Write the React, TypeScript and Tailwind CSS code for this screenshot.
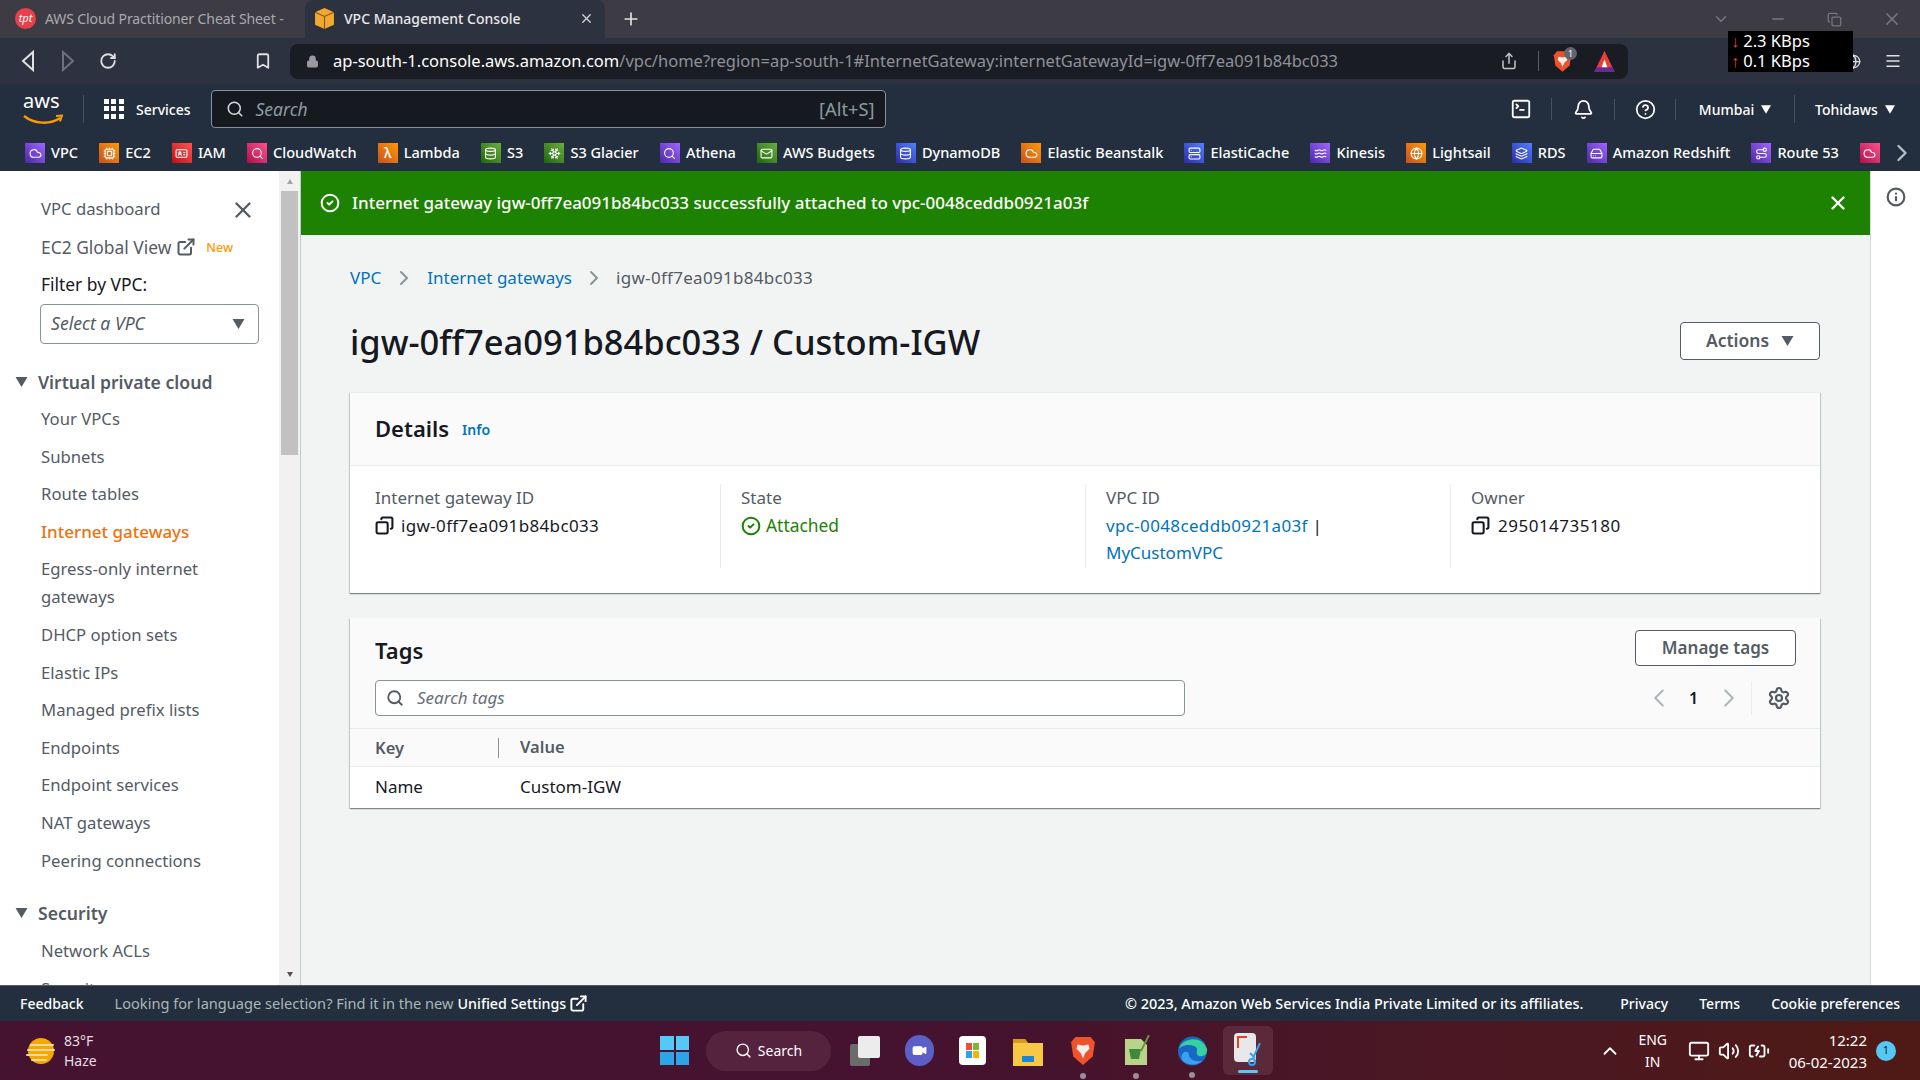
import { ReactNode } from "react"
import {
  Bell, ChevronLeft, ChevronRight, ChevronUp, Cloud, Cpu, Database, ExternalLink, Globe, HardDrive, IdCard, Info, Layers, Lock, Mail,
  Menu, Minus, Monitor, Plus, RotateCw, Route, Search, Server, Settings, Share, Snowflake, SquareTerminal, Video, Volume2, Waves, X, Bookmark, CircleHelp, CircleCheck, Copy, BatteryCharging,
} from "lucide-react"

const purple = "bg-gradient-to-tr from-[#4d27a8] to-[#a166ff]"
const orange = "bg-gradient-to-tr from-[#c8511b] to-[#ff9900]"
const red = "bg-gradient-to-tr from-[#bd0816] to-[#ff5252]"
const pink = "bg-gradient-to-tr from-[#b0084d] to-[#ff4f8b]"
const green = "bg-gradient-to-tr from-[#1b660f] to-[#6cae3e]"
const blue = "bg-gradient-to-tr from-[#2e27ad] to-[#527fff]"

const favorites = [
  { name: "VPC", cls: purple, icon: <Cloud size={13} /> },
  { name: "EC2", cls: orange, icon: <Cpu size={13} /> },
  { name: "IAM", cls: red, icon: <IdCard size={13} /> },
  { name: "CloudWatch", cls: pink, icon: <Search size={13} /> },
  { name: "Lambda", cls: orange, icon: <span className="text-[14px] leading-none">λ</span> },
  { name: "S3", cls: green, icon: <Database size={13} /> },
  { name: "S3 Glacier", cls: green, icon: <Snowflake size={13} /> },
  { name: "Athena", cls: purple, icon: <Search size={13} /> },
  { name: "AWS Budgets", cls: green, icon: <Mail size={13} /> },
  { name: "DynamoDB", cls: blue, icon: <Database size={13} /> },
  { name: "Elastic Beanstalk", cls: orange, icon: <Cloud size={13} /> },
  { name: "ElastiCache", cls: blue, icon: <Server size={13} /> },
  { name: "Kinesis", cls: purple, icon: <Waves size={13} /> },
  { name: "Lightsail", cls: orange, icon: <Globe size={13} /> },
  { name: "RDS", cls: blue, icon: <Layers size={13} /> },
  { name: "Amazon Redshift", cls: purple, icon: <HardDrive size={13} /> },
  { name: "Route 53", cls: purple, icon: <Route size={13} /> },
]

const vpcLinks = ["Your VPCs", "Subnets", "Route tables", "Internet gateways", "Egress-only internet gateways", "DHCP option sets", "Elastic IPs", "Managed prefix lists", "Endpoints", "Endpoint services", "NAT gateways", "Peering connections"]

const cardShadow = "shadow-[0_1px_1px_0_rgba(0,28,36,0.3),1px_1px_1px_0_rgba(0,28,36,0.15),-1px_1px_1px_0_rgba(0,28,36,0.15)]"

function Caret({ className = "" }: { className?: string }) {
  return (
    <svg viewBox="0 0 12 10" className={className} fill="currentColor">
      <path d="M0 0h12L6 10z" />
    </svg>
  )
}

function BraveShield({ className = "" }: { className?: string }) {
  return (
    <svg viewBox="0 0 24 28" className={className}>
      <path d="M5 1h14l4 5-2 13-9 8-9-8L1 6z" fill="#f0532b" />
      <path d="M7 8l5 1 5-1 1 4-4 4-2 5-2-5-4-4z" fill="#fff" opacity="0.9" />
    </svg>
  )
}

function AwsLogo() {
  return (
    <div className="relative w-[40px] h-[34px]">
      <span className="absolute left-0 top-[-3px] text-[20px] leading-[24px] text-white font-normal">aws</span>
      <svg viewBox="0 0 40 12" className="absolute left-0 bottom-0 w-[40px] h-[12px]" fill="none">
        <path d="M1 2c10 8 26 9 36 2" stroke="#f90" strokeWidth="2.4" />
        <path d="M33 2l6-.5-2 6" stroke="#f90" strokeWidth="2" />
      </svg>
    </div>
  )
}

function ChromeBars() {
  return (
    <>
      <div className="h-[38px] bg-[#3d3c45] flex items-end text-[14px] shrink-0">
        <div className="w-[305px] h-[37px] flex items-center pl-[15px] text-[#a9a9ae] whitespace-nowrap overflow-hidden pb-[2px]">
          <span className="w-[21px] h-[21px] rounded-full bg-[#e8404a] text-white text-[11px] italic flex items-center justify-center mr-[9px] shrink-0">tpt</span>
          <span className="tracking-[-0.1px]">AWS Cloud Practitioner Cheat Sheet -</span>
        </div>
        <div className="w-[300px] h-[38px] bg-[#2d3240] rounded-t-lg flex items-center pl-[10px] pr-[11px] pb-[2px] text-[#e8e8ea]">
          <svg viewBox="0 0 18 20" className="w-[19px] h-[21px] mr-[10px]">
            <path d="M9 0l9 4v12l-9 4-9-4V4z" fill="#f0a92e" />
            <path d="M9 8v12M0 4l9 4 9-4" stroke="#7a5510" strokeWidth="1" fill="none" />
          </svg>
          <span className="font-medium">VPC Management Console</span>
          <X size={15} className="ml-auto text-[#d8d8da]" />
        </div>
        <Plus size={20} className="text-[#e2e2e4] ml-[16px] mb-[9px]" />
        <div className="ml-auto h-[38px] flex items-center text-[#77777e]">
          <span className="w-[57px] flex justify-center"><ChevronUp size={18} className="rotate-180" /></span>
          <span className="w-[57px] flex justify-center"><Minus size={18} /></span>
          <span className="w-[57px] flex justify-center"><Copy size={15} /></span>
          <span className="w-[57px] flex justify-center"><X size={20} /></span>
        </div>
      </div>
      <div className="h-[46px] bg-[#2d3240] flex items-center shrink-0 text-[#e0e0e2]">
        <svg viewBox="0 0 14 22" className="w-[14px] h-[22px] ml-[21px]" fill="none" stroke="currentColor" strokeWidth="2">
          <path d="M12 2L2 11l10 9z" />
        </svg>
        <svg viewBox="0 0 14 22" className="w-[14px] h-[22px] ml-[26px] text-[#6f727c]" fill="none" stroke="currentColor" strokeWidth="2">
          <path d="M2 2l10 9-10 9z" />
        </svg>
        <RotateCw size={18} strokeWidth={2.4} className="ml-[24px]" />
        <Bookmark size={18} strokeWidth={2.4} className="ml-[137px]" />
        <div className="ml-[18px] w-[1338px] h-[35px] rounded-lg bg-[#1a1c23] flex items-center pl-[16px] text-[16.5px] whitespace-nowrap">
          <Lock size={13} className="text-[#9a9aa0] fill-[#9a9aa0] mr-[14px]" />
          <span className="text-white">ap-south-1.console.aws.amazon.com</span>
          <span className="text-[#8f9199]">/vpc/home?region=ap-south-1#InternetGateway:internetGatewayId=igw-0ff7ea091b84bc033</span>
          <Share size={18} className="ml-auto text-[#c5c5c8]" />
          <span className="w-px h-[20px] bg-[#5a5c66] ml-[20px]" />
          <span className="relative ml-[14px] mr-[21px]">
            <BraveShield className="block w-[19px] h-[23px]" />
            <span className="absolute -top-[3px] left-[11px] w-[13px] h-[13px] rounded-full bg-[#62646e] text-[9px] leading-[13px] text-center text-white">1</span>
          </span>
          <svg viewBox="0 0 24 24" className="w-[23px] h-[23px] mr-[12px]">
            <path d="M12 1l11 22H1z" fill="#6a2a92" />
            <path d="M12 1l8 17H4z" fill="#e8412e" />
            <path d="M12 10l3 8H9z" fill="#fff" />
          </svg>
        </div>
        <Globe size={15} className="ml-[218px]" />
        <Menu size={18} className="ml-auto mr-[18px]" />
      </div>
    </>
  )
}

function AwsHeader() {
  return (
    <div className="bg-[#232f3e] shrink-0 text-white text-[14px]">
      <div className="h-[47px] pt-[3px] flex items-center">
        <div className="ml-[23px]"><AwsLogo /></div>
        <span className="w-px h-[28px] bg-[#47525f] ml-[20px]" />
        <div className="ml-[20px] grid grid-cols-3 gap-[2px] w-[20px] h-[20px]">
          {Array.from({ length: 9 }).map((_, i) => (
            <span key={i} className="bg-white w-[5px] h-[5px]" />
          ))}
        </div>
        <span className="ml-[12px] font-medium">Services</span>
        <div className="ml-[20px] w-[675px] h-[38px] bg-[#161a20] border border-[#8a939c] rounded-sm flex items-center pl-[14px] pr-[10px]">
          <Search size={18} className="text-[#d5dbdb]" />
          <span className="ml-[12px] italic text-[#8b9aa0] text-[17.5px]">Search</span>
          <span className="ml-auto text-[#8b9aa0] text-[18.3px]">[Alt+S]</span>
        </div>
        <div className="ml-auto flex items-center h-[28px]">
          <div className="w-[62px] flex justify-center border-r border-[#47525f]"><SquareTerminal size={22} /></div>
          <div className="w-[63px] flex justify-center border-r border-[#47525f]"><Bell size={21} /></div>
          <div className="w-[61px] flex justify-center border-r border-[#47525f]"><CircleHelp size={21} /></div>
          <div className="w-[119px] flex items-center justify-center gap-[7px] border-r border-[#47525f] h-full font-medium">Mumbai<Caret className="w-[10px] h-[9px]" /></div>
          <div className="w-[125px] pl-[20px] flex items-center gap-[7px] font-medium">Tohidaws<Caret className="w-[10px] h-[9px]" /></div>
        </div>
      </div>
      <div className="h-[40px] pt-[4px] flex items-center pl-[25px] overflow-hidden relative whitespace-nowrap text-[14.5px]">
        {favorites.map((f) => (
          <div key={f.name} className="flex items-center gap-[6px] mr-[21.2px] shrink-0 font-medium">
            <span className={`w-[20px] h-[20px] flex items-center justify-center text-white ${f.cls}`}>{f.icon}</span>
            {f.name}
          </div>
        ))}
        <span className={`w-[20px] h-[20px] flex items-center justify-center shrink-0 ${pink}`}><Cloud size={13} /></span>
        <div className="absolute right-0 top-0 h-full w-[36px] bg-[#232f3e] flex items-center justify-center text-[#b6bec9] pt-[4px]"><ChevronRight size={28} /></div>
      </div>
    </div>
  )
}

function Sidebar() {
  return (
    <aside className="w-[301px] shrink-0 flex border-r border-[#c3c9cc] bg-white">
      <div className="w-[279px] pl-[41px] pr-[20px] pt-[24px] text-[#545b64] text-[16.7px] leading-[28px] overflow-hidden whitespace-nowrap">
        <div className="flex items-center justify-between">
          <span>VPC dashboard</span>
          <X size={26} strokeWidth={2.2} className="mr-[3px] mt-[2px]" />
        </div>
        <div className="flex items-center mt-[9px] text-[17.4px]">
          EC2 Global View
          <ExternalLink size={20} strokeWidth={2.4} className="ml-[5px]" />
          <span className="text-[#ff9900] text-[12.5px] font-medium ml-[10px] mt-[2px]">New</span>
        </div>
        <div className="mt-[8px] text-[#16191f] text-[17.4px]">Filter by VPC:</div>
        <div className="mt-[6px] ml-[-1px] h-[40px] border border-[#879596] rounded-sm flex items-center px-[10px] italic text-[17.6px] pb-[2px]">
          Select a VPC
          <Caret className="w-[13px] h-[10px] ml-auto mr-[3px] mt-[2px]" />
        </div>
        <div className="ml-[-26px] mt-[24px] flex items-center gap-[10px] font-semibold text-[17.6px]">
          <Caret className="w-[13px] h-[10px]" />
          Virtual private cloud
        </div>
        <ul className="mt-[9px] flex flex-col gap-[9.6px] whitespace-normal">
          {vpcLinks.map((l) => (
            <li key={l} className={l === "Internet gateways" ? "text-[#ec7211] font-medium text-[17px]" : ""}>{l}</li>
          ))}
        </ul>
        <div className="ml-[-26px] mt-[24px] flex items-center gap-[10px] font-semibold text-[17.6px]">
          <Caret className="w-[13px] h-[10px]" />
          Security
        </div>
        <div className="mt-[10px]">Network ACLs</div>
        <div className="mt-[10px]">Security groups</div>
      </div>
      <div className="w-[21px] bg-[#f1f1f1] flex flex-col items-center">
        <Caret className="w-[8px] h-[5px] text-[#a3a3a3] rotate-180 mt-[8px] mb-[3px]" />
        <div className="w-[17px] h-[264px] bg-[#c1c1c1] mt-[4px]" />
        <Caret className="w-[8px] h-[5px] text-[#505050] mt-auto mb-[8px]" />
      </div>
    </aside>
  )
}

function Detail({ label, children, border = true }: { label: string; children: ReactNode; border?: boolean }) {
  return (
    <div className={`pl-[20px] first:pl-0 h-[84px] ${border ? "border-r border-[#eaeded]" : ""}`}>
      <div className="text-[#545b64] leading-[28px]">{label}</div>
      <div className="text-[#16191f] leading-[27px] tracking-[0.35px]">{children}</div>
    </div>
  )
}

function Main() {
  return (
    <main className="flex-1 min-w-0 bg-[#f2f3f3] flex flex-col">
      <div className="h-[64px] bg-[#1d8102] flex items-center pl-[19px] pr-[21px] text-white text-[17px] font-medium shrink-0 whitespace-nowrap">
        <CircleCheck size={20} strokeWidth={2.4} className="mr-[12px]" />
        Internet gateway igw-0ff7ea091b84bc033 successfully attached to vpc-0048ceddb0921a03f
        <X size={22} strokeWidth={2.6} className="ml-auto" />
      </div>
      <div className="pl-[49px] pr-[50px] text-[17px]">
        <div className="mt-[29px] h-[28px] flex items-center text-[#0073bb]">
          VPC
          <ChevronRight size={24} className="text-[#879596] mx-[11px]" />
          Internet gateways
          <ChevronRight size={24} className="text-[#879596] mx-[10px]" />
          <span className="text-[#545b64] tracking-[0.3px]">igw-0ff7ea091b84bc033</span>
        </div>
        <div className="mt-[27px] h-[45px] flex items-center justify-between">
          <h1 className="text-[34.5px] leading-[44px] text-[#16191f] font-medium pt-[1px]">igw-0ff7ea091b84bc033 / Custom-IGW</h1>
          <button className="w-[140px] h-[38px] -mt-[2px] bg-white border border-[#545b64] rounded-sm text-[#545b64] font-semibold text-[17.5px] flex items-center justify-center gap-[12px]">
            Actions
            <Caret className="w-[13px] h-[10px]" />
          </button>
        </div>
        <section className={`mt-[28px] bg-white border-t border-[#eaeded] ${cardShadow}`}>
          <div className="h-[73px] pb-[2px] bg-[#fafafa] border-b border-[#eaeded] flex items-center px-[25px]">
            <h2 className="text-[22px] font-semibold text-[#16191f]">Details</h2>
            <span className="ml-[13px] mt-[3px] text-[#0073bb] text-[14px] font-semibold">Info</span>
          </div>
          <div className="grid grid-cols-[346px_365px_365px_1fr] pl-[25px] pt-[18px] pb-[25px]">
            <Detail label="Internet gateway ID">
              <span className="flex items-center gap-[7px]"><Copy size={19} strokeWidth={2.6} className="-scale-x-100" />igw-0ff7ea091b84bc033</span>
            </Detail>
            <Detail label="State">
              <span className="flex items-center gap-[5px] text-[#1d8102] tracking-normal text-[17.4px]"><CircleCheck size={20} strokeWidth={2.4} />Attached</span>
            </Detail>
            <Detail label="VPC ID">
              <span className="text-[#0073bb]">vpc-0048ceddb0921a03f</span> <span>|</span><br />
              <span className="text-[#0073bb] tracking-normal">MyCustomVPC</span>
            </Detail>
            <Detail label="Owner" border={false}>
              <span className="flex items-center gap-[8px] tracking-[0.5px]"><Copy size={19} strokeWidth={2.6} className="-scale-x-100" />295014735180</span>
            </Detail>
          </div>
        </section>
        <section className={`mt-[25px] bg-white ${cardShadow}`}>
          <div className="h-[111px] bg-[#fafafa] pl-[25px] pr-[24px] pt-[12px] border-b border-[#eaeded]">
            <div className="flex justify-between items-center h-[36px]">
              <h2 className="text-[22px] font-semibold text-[#16191f] mt-[5px]">Tags</h2>
              <button className="w-[161px] h-[36px] bg-white border border-[#545b64] rounded-sm text-[#545b64] font-semibold">Manage tags</button>
            </div>
            <div className="mt-[14px] flex items-center">
              <div className="w-[810px] h-[36px] bg-white border border-[#879596] rounded-sm flex items-center px-[10px]">
                <Search size={18} strokeWidth={2.4} className="text-[#545b64]" />
                <span className="ml-[13px] italic text-[#687078]">Search tags</span>
              </div>
              <ChevronLeft size={30} strokeWidth={1.6} className="ml-auto text-[#aab7b8]" />
              <span className="ml-[15px] w-[8px] text-center text-[#16191f] font-semibold text-[16px]">1</span>
              <ChevronRight size={30} strokeWidth={1.6} className="ml-[17px] text-[#aab7b8]" />
              <span className="w-px h-[34px] bg-[#eaeded] ml-[7px]" />
              <Settings size={24} strokeWidth={2.2} className="text-[#545b64] ml-[15px] mr-[5px]" />
            </div>
          </div>
          <div className="h-[38px] bg-[#fafafa] border-b border-[#eaeded] flex items-center pl-[25px] text-[#545b64] font-semibold text-[16.5px]">
            <span className="w-[124px] border-r border-[#879596] leading-[20px] mr-[21px]">Key</span>
            Value
          </div>
          <div className="h-[41px] pb-[2px] flex items-center pl-[25px] text-[#16191f]">
            <span className="w-[145px]">Name</span>
            Custom-IGW
          </div>
        </section>
      </div>
    </main>
  )
}

function Footer() {
  return (
    <div className="h-[36px] bg-[#232f3e] border-t border-[#545b64] shrink-0 flex items-center pl-[20px] pr-[20px] text-[14.4px] text-white font-medium whitespace-nowrap">
      <span className="text-[14px]">Feedback</span>
      <span className="ml-[31px] text-[#aab7b8] font-normal text-[14.6px]">Looking for language selection? Find it in the new</span>
      <span className="ml-[4px] text-[14.3px]">Unified Settings</span>
      <ExternalLink size={19} strokeWidth={2.4} className="ml-[3px]" />
      <span className="ml-auto">© 2023, Amazon Web Services India Private Limited or its affiliates.</span>
      <span className="ml-[37px] text-[14px]">Privacy</span>
      <span className="ml-[31px] text-[14px]">Terms</span>
      <span className="ml-[31px] text-[14px]">Cookie preferences</span>
    </div>
  )
}

function Taskbar() {
  return (
    <div className="h-[59px] bg-gradient-to-r from-[#45122f] via-[#45122f] to-[#4f1a14] shrink-0 flex items-center text-white text-[14px]">
      <div className="w-[660px] flex items-center pl-[25px]">
        <svg viewBox="0 0 30 32" className="w-[30px] h-[32px]">
          <circle cx="16" cy="16" r="13" fill="#f5a800" />
          <path d="M6 10h22M3 15h26M2 20h20M7 25h14" stroke="#f3d9a0" strokeWidth="2" strokeLinecap="round" />
        </svg>
        <div className="ml-[9px] leading-[20px] text-[#e6dfe2]">83°F<br />Haze</div>
      </div>
      <div className="grid grid-cols-2 gap-[2px] w-[29px] h-[29px] shrink-0">
        <span className="bg-[#56c8f5]" /><span className="bg-[#56c8f5]" />
        <span className="bg-[#2ba4e8]" /><span className="bg-[#2ba4e8]" />
      </div>
      <div className="ml-[17px] w-[125px] h-[40px] rounded-full bg-[#56233f] flex items-center justify-center gap-[6px] text-[14px]">
        <Search size={17} />Search
      </div>
      <div className="ml-[19px] flex items-center">
        <svg viewBox="0 0 30 30" className="w-[30px] h-[30px]">
          <rect x="0" y="8" width="20" height="22" rx="2" fill="#6b6b6b" />
          <rect x="8" y="0" width="22" height="22" rx="2" fill="#ececec" />
        </svg>
        <div className="ml-[25px] w-[29px] h-[31px] rounded-full bg-[#5b5fc7] flex items-center justify-center"><Video size={15} className="fill-white" /></div>
        <div className="ml-[25px] w-[27px] h-[29px] rounded-sm bg-white grid grid-cols-2 gap-[1px] p-[7px]">
          <span className="bg-[#e8503a]" /><span className="bg-[#7cb82f]" /><span className="bg-[#2ba4e8]" /><span className="bg-[#f5b400]" />
        </div>
        <svg viewBox="0 0 30 30" className="ml-[27px] w-[30px] h-[30px]">
          <path d="M0 3h12l3 4h15v23H0z" fill="#f6c846" />
          <path d="M0 3h12l3 4H0z" fill="#d49b1a" />
          <rect x="9" y="20" width="12" height="6" fill="#1a86d8" />
        </svg>
        <div className="ml-[27px] relative">
          <BraveShield className="w-[26px] h-[32px]" />
          <span className="absolute left-[10px] top-[38px] w-[6px] h-[6px] rounded-full bg-[#9c8e94]" />
        </div>
        <div className="ml-[27px] relative">
          <svg viewBox="0 0 27 32" className="w-[27px] h-[32px]">
            <path d="M2 4h16l6 6v20H2z" fill="#b8d48a" />
            <path d="M6 14h12l-2 10H8z" fill="#3d8a3a" />
            <path d="M26 0L18 16" stroke="#6f8f3f" strokeWidth="2" />
          </svg>
          <span className="absolute left-[10px] top-[38px] w-[6px] h-[6px] rounded-full bg-[#9c8e94]" />
        </div>
        <div className="ml-[27px] relative">
          <svg viewBox="0 0 32 32" className="w-[31px] h-[32px]">
            <circle cx="16" cy="16" r="15" fill="#1668c4" />
            <path d="M2 14C5 2 26-1 31 14c1 7-7 9-10 6-2-4 2-7-3-9C11 8 4 11 2 14z" fill="#37d0a0" />
            <path d="M12 18c0 6 6 10 14 8-4 5-16 6-21-1-2-5 3-11 7-7z" fill="#3ba0f0" />
          </svg>
          <span className="absolute left-[12px] top-[37px] w-[6px] h-[6px] rounded-full bg-[#9c8e94]" />
        </div>
        <div className="ml-[15px] w-[50px] h-[49px] rounded-md bg-[#5b2a3a] flex items-center justify-center relative">
          <div className="w-[22px] h-[29px] bg-[#e8e8ea] rounded-sm mr-[6px] mb-[6px] p-[3px]">
            <div className="w-[10px] h-[12px] border-l-2 border-t-2 border-[#d8452e]" />
          </div>
          <svg viewBox="0 0 14 24" className="absolute right-[11px] top-[17px] w-[14px] h-[24px]" fill="none" stroke="#3ba0f0" strokeWidth="2">
            <path d="M12 0L5 15M2 10l5 5" />
            <circle cx="4" cy="19" r="3" />
          </svg>
          <span className="absolute bottom-[2px] w-[20px] h-[3px] rounded bg-[#56c8f5]" />
        </div>
      </div>
      <div className="ml-auto flex items-center pr-[24px]">
        <ChevronUp size={22} />
        <div className="ml-[15px] w-[34px] text-center leading-[22px]">ENG<br />IN</div>
        <Monitor size={22} className="ml-[18px]" />
        <Volume2 size={22} className="ml-[8px]" />
        <BatteryCharging size={22} className="ml-[8px]" />
        <div className="ml-[19px] text-right leading-[22px] text-[15px]">12:22<br />06-02-2023</div>
        <span className="ml-[9px] w-[20px] h-[20px] rounded-full bg-[#56c8f5] text-[#12202e] text-[11px] flex items-center justify-center">1</span>
      </div>
    </div>
  )
}

export default function App() {
  return (
    <div className="w-[1920px] h-[1080px] flex flex-col overflow-hidden relative bg-white font-['Noto_Sans',sans-serif]">
      <ChromeBars />
      <AwsHeader />
      <div className="flex-1 min-h-0 flex overflow-hidden">
        <Sidebar />
        <Main />
        <div className="w-[50px] shrink-0 bg-white border-l border-[#d5dbdb] flex justify-center pt-[16px] text-[#545b64]">
          <Info size={20} strokeWidth={2.6} />
        </div>
      </div>
      <Footer />
      <Taskbar />
      <div className="absolute left-[1728px] top-[31px] w-[125px] h-[41px] bg-black text-white text-[16.5px] leading-[20px] pl-[3px] flex flex-col">
        <span><span className="text-[#e04a2a] font-bold mr-[4px]">↓</span>2.3 KBps</span>
        <span><span className="text-[#e04a2a] font-bold mr-[4px]">↑</span>0.1 KBps</span>
      </div>
    </div>
  )
}
